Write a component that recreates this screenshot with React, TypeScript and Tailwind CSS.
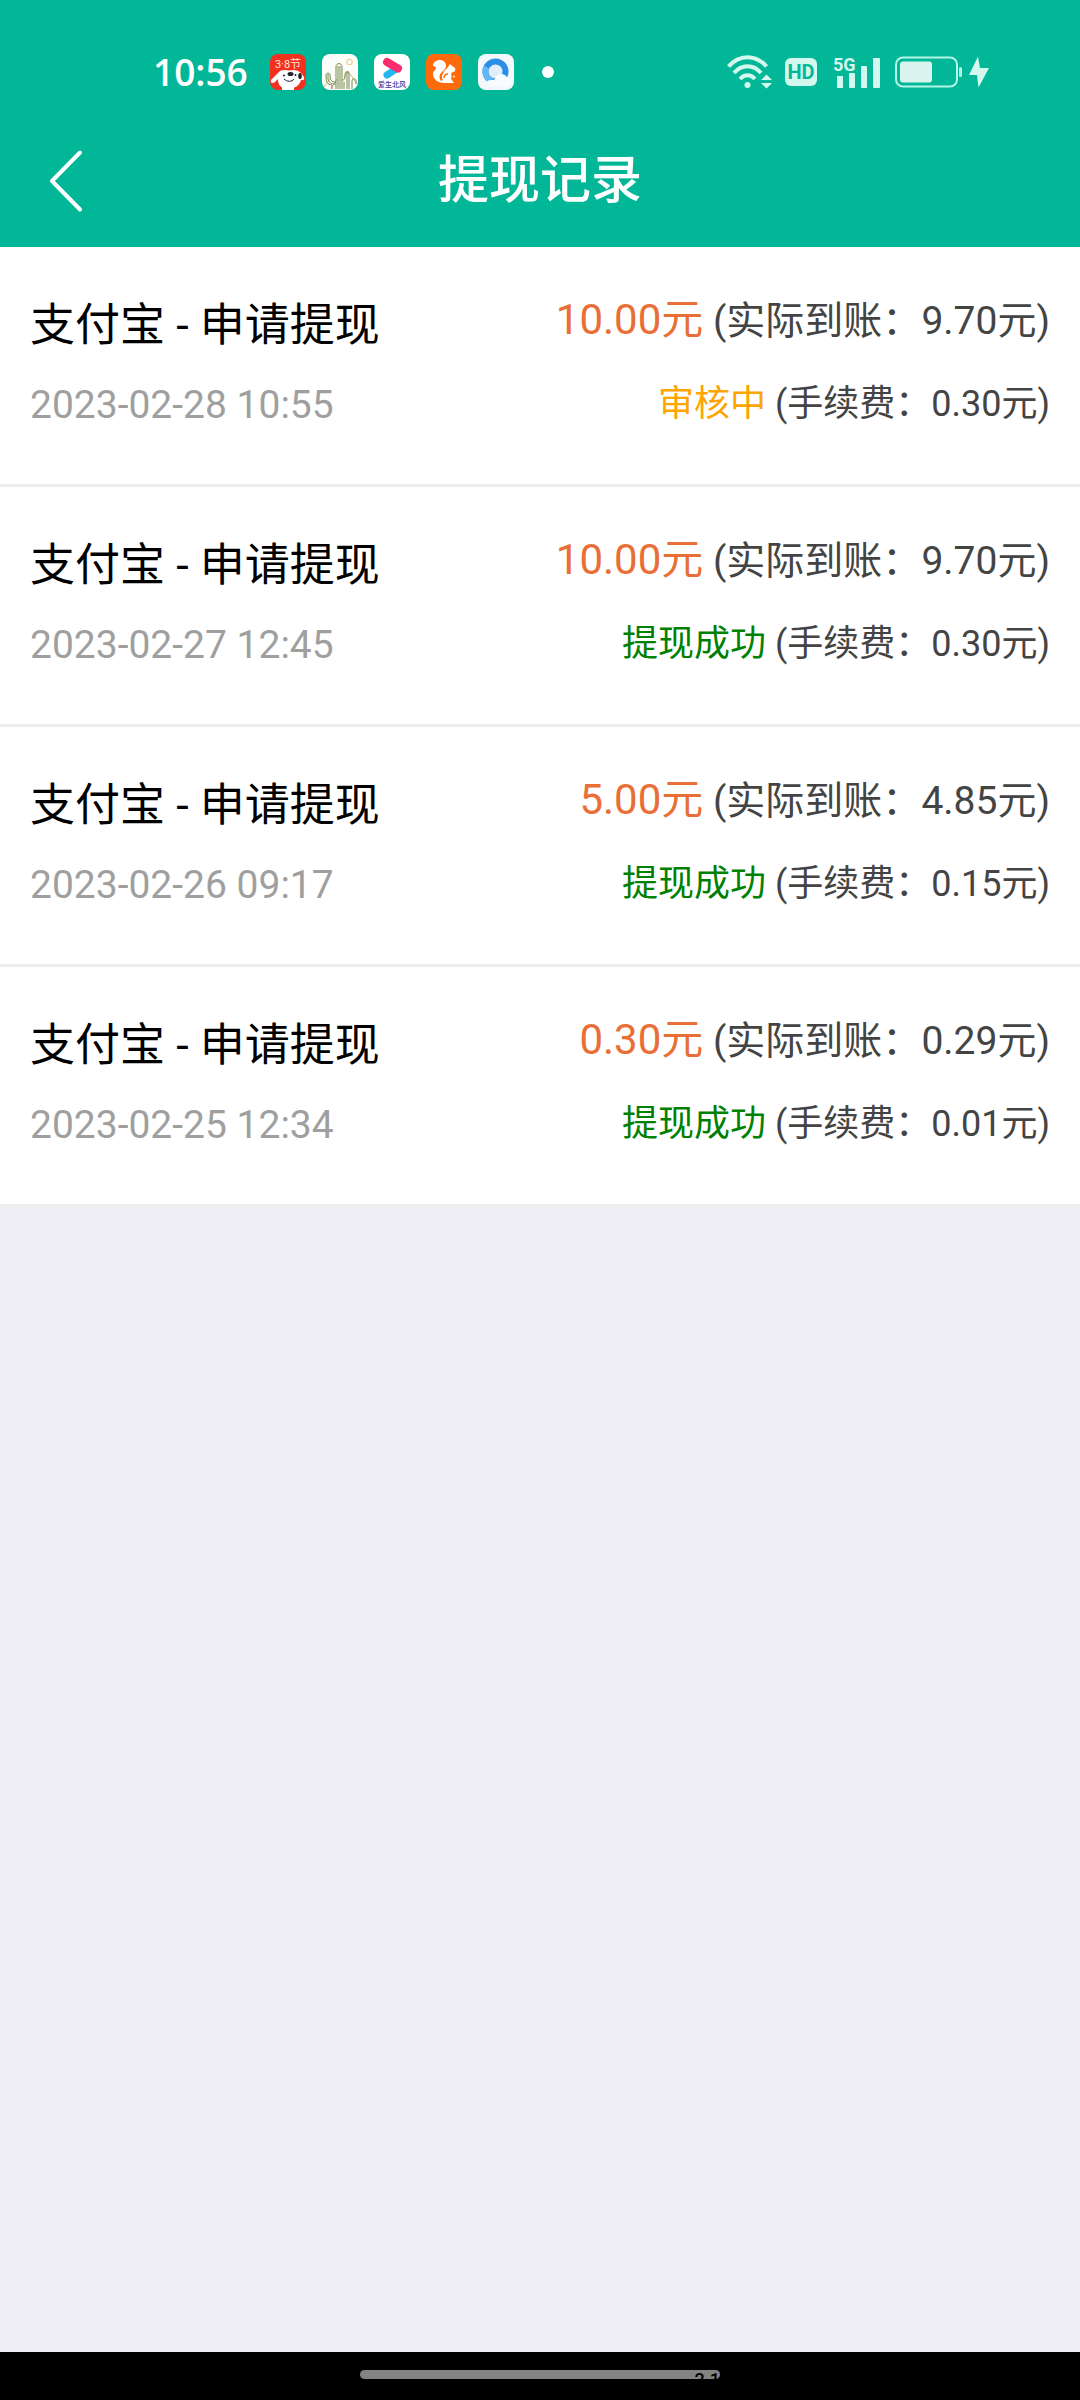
type RecordStatus = "pending" | "success";

const records: {
  id: number;
  title: string;
  time: string;
  amount: string;
  received: string;
  fee: string;
  status: RecordStatus;
}[] = [
  { id: 4, title: "支付宝 - 申请提现", time: "2023-02-28 10:55", amount: "10.00", received: "9.70", fee: "0.30", status: "pending" },
  { id: 3, title: "支付宝 - 申请提现", time: "2023-02-27 12:45", amount: "10.00", received: "9.70", fee: "0.30", status: "success" },
  { id: 2, title: "支付宝 - 申请提现", time: "2023-02-26 09:17", amount: "5.00", received: "4.85", fee: "0.15", status: "success" },
  { id: 1, title: "支付宝 - 申请提现", time: "2023-02-25 12:34", amount: "0.30", received: "0.29", fee: "0.01", status: "success" },
];

const statusMeta: Record<RecordStatus, { label: string; className: string }> = {
  pending: { label: "审核中", className: "text-[#ffa500]" },
  success: { label: "提现成功", className: "text-[#008000]" },
};

function DogIcon() {
  return (
    <svg viewBox="0 0 36 36" className="size-9 rounded-lg bg-[#f4301f]" aria-hidden>
      <text x="18" y="14" textAnchor="middle" fontSize="11" fill="#ffe9d8">
        3·8节
      </text>
      <path
        d="M9 18 C11 15.500 16 16 19 16.500 C23 15.500 28 15.500 31 19 L34 23 C35 26 33 26.500 31 26 C30 30 27 33 24 33.500 L24 36 H12 V33.500 C9 32 8 29 8 25 L5 28 C3 30 0 29 1 26 Z"
        fill="#fff"
      />
      <ellipse cx="20.500" cy="20" rx="3" ry="2" fill="#222" />
      <ellipse cx="30" cy="22" rx="1.800" ry="3" fill="#222" />
      <circle cx="14" cy="21.500" r="1" fill="#222" />
      <circle cx="25.500" cy="21" r="1" fill="#222" />
      <path d="M14 25 C17 28 22 28 24 25" fill="none" stroke="#222" strokeWidth="1" />
    </svg>
  );
}

function CactusIcon() {
  return (
    <svg viewBox="0 0 36 36" className="size-9 rounded-lg bg-[#fdfefa]" fill="none" aria-hidden>
      <circle cx="27.500" cy="8" r="2.800" stroke="#e8c07a" />
      <path d="M2 33 L9 24 M22 24 L26 17 L35 30 M9 35 L15 25" stroke="#c9b48a" />
      <g stroke="#75894d" strokeWidth="1">
        <path d="M14 35 V13 C14 8.500 20 8.500 20 13 V35 M16 35 V12 M18 35 V12" />
        <path d="M14 28 C9 28 8 26 8 21 C8 18.500 4 18.500 4 21 C4 27 5 31 10 31 V35 M6 20 V25 C7 29 9 30 14 30" />
        <path d="M20 26 C23 26 23 25 23 20 C23 17 27 17 27 20 V35 M25 18 V35 M22 35 V28 M30 35 V27 C30 24 34 24 34 27 V30" />
      </g>
    </svg>
  );
}

function VideoIcon() {
  return (
    <svg viewBox="0 0 36 36" className="size-9 rounded-lg bg-white" aria-hidden>
      <path d="M13 21 L22 15" stroke="#22b8f0" strokeWidth="7" strokeLinecap="round" />
      <path d="M13 8 L24 14.500" stroke="#fb2c6e" strokeWidth="8" strokeLinecap="round" />
      <text x="18" y="33" textAnchor="middle" fontSize="7" fontWeight="500" fill="#4a3a9a">
        爱生北风
      </text>
    </svg>
  );
}

function SquirrelIcon() {
  return (
    <svg viewBox="0 0 36 36" className="size-9 rounded-lg bg-[#ff6a0a]" aria-hidden>
      <path
        d="M7 12 C7 8 11 6 14 6 C18 6 20 9 20 12 C20 15 17 16 15.500 18 C19 16 21 15 22 13 L24 10 L26 12 C29 13 30 15 29 17 C28 18.500 25.500 18 25 19.500 C26 22 25.500 24 25 25 L28 29 H18 C12 29 7 25 7 20 C7 17 10 16 10 14 C10 13 9 12 7 12 Z"
        fill="#fff"
      />
      <path d="M15 27 C12 22 14 18 19 17 C16 20 15 23 17 26 Z" fill="#ff6a0a" />
      <path d="M18 24 C18 21 20 20 22 20" fill="none" stroke="#ff6a0a" strokeWidth="1.500" />
      <circle cx="28" cy="22.500" r="1" fill="#fff" />
    </svg>
  );
}

function BrowserIcon() {
  return (
    <svg viewBox="0 0 36 36" className="size-9 rounded-lg bg-[#f3f8fd]" aria-hidden>
      <circle cx="17.500" cy="17.500" r="10" fill="#e2edf7" stroke="#2b8fe8" strokeWidth="6" />
      <path d="M8.500 13 A10 10 0 0 0 14 27" fill="none" stroke="#63b7f3" strokeWidth="6" />
      <path d="M13 32 C7 32 7 26 13 26 C15 26 16 26 17 25 C18 19 27 18 29 23.500 C36 24 35 32 29 32 Z" fill="#f8fbff" />
    </svg>
  );
}

function WifiIcon() {
  return (
    <svg viewBox="0 0 46 34" className="h-[34px] w-[46px]" fill="none" stroke="#d3f8ee" aria-hidden>
      <path d="M1.500 11.500 C12 -1 29 -1 39.500 11.500" strokeWidth="4" />
      <path d="M7 18 C14.500 9 26.500 9 34 18" strokeWidth="4" />
      <path d="M13 24 C17.500 19 23.500 19 28 24" strokeWidth="4" />
      <circle cx="20.500" cy="30" r="3" fill="#d3f8ee" stroke="none" />
      <path d="M34 25 L39.500 19.500 L45 25 Z M34 28 L39.500 33.500 L45 28 Z" fill="#d3f8ee" stroke="none" />
    </svg>
  );
}

function SignalIcon() {
  return (
    <svg viewBox="0 0 48 38" className="h-[38px] w-12" fill="#d3f8ee" aria-hidden>
      <text x="0" y="18" fontSize="18" fontWeight="700">
        5G
      </text>
      <rect x="4" y="23" width="6" height="12" rx="1" />
      <rect x="16" y="20" width="6" height="15" rx="1" />
      <rect x="28" y="13" width="6" height="22" rx="1" />
      <rect x="40" y="5" width="7" height="30" rx="1" />
    </svg>
  );
}

function BatteryIcon() {
  return (
    <svg viewBox="0 0 68 32" className="h-8 w-[68px]" aria-hidden>
      <rect x="1" y="1.500" width="61" height="29" rx="7" fill="none" stroke="#b5f5e5" strokeWidth="2" />
      <rect x="5" y="5.500" width="32" height="21" rx="3" fill="#d9f5ee" />
      <rect x="64" y="11" width="3" height="10" rx="1.500" fill="#b5f5e5" />
    </svg>
  );
}

function BoltIcon() {
  return (
    <svg viewBox="0 0 20 32" className="h-8 w-5" fill="#d3f8ee" aria-hidden>
      <path d="M9 0.500 L0 19 H8 L9.500 31.500 L20 12 H11 Z" />
    </svg>
  );
}

function StatusBar() {
  return (
    <div className="flex h-[114px] items-center justify-between pt-[30px] pr-[91px] pl-[153px]">
      <div className="flex items-center gap-4">
        <span className="w-[101px] font-['Open_Sans'] text-[37px] leading-[44px] font-semibold">10:56</span>
        <DogIcon />
        <CactusIcon />
        <VideoIcon />
        <SquirrelIcon />
        <BrowserIcon />
        <span className="ml-3 size-3 rounded-full bg-white" />
      </div>
      <div className="flex items-center">
        <WifiIcon />
        <span className="ml-3 flex h-7 w-8 items-center justify-center rounded-md bg-[#d3f8ee] text-xl font-bold text-[#02b798]">
          HD
        </span>
        <span className="ml-4">
          <SignalIcon />
        </span>
        <span className="ml-[14px]">
          <BatteryIcon />
        </span>
        <span className="ml-[6px]">
          <BoltIcon />
        </span>
      </div>
    </div>
  );
}

function NavBar() {
  return (
    <div className="grid h-[133px] grid-cols-[1fr_auto_1fr] items-center px-[48px]">
      <button type="button" aria-label="返回" className="justify-self-start">
        <svg viewBox="0 0 36 64" className="h-16 w-9" fill="none" stroke="#fff" strokeWidth="4" strokeLinecap="round" strokeLinejoin="round">
          <path d="M32 3.500 L4 32 L32 60.500" />
        </svg>
      </button>
      <h1 className="text-[51px] leading-[60px] font-medium">提现记录</h1>
    </div>
  );
}

export default function App() {
  return (
    <div className="flex min-h-screen flex-col bg-[#efeef4] font-['Roboto','Noto_Sans_CJK_SC',sans-serif]">
      <header className="bg-[#02b798] text-white">
        <StatusBar />
        <NavBar />
      </header>

      <ul>
        {records.map((item) => {
          const status = statusMeta[item.status];
          return (
            <li
              key={item.id}
              className="flex h-60 justify-between border-b-[3px] border-[#eeeeee] bg-white px-[30px] pt-[42px]"
            >
              <div>
                <p className="text-[45px] leading-[74px] text-black">{item.title}</p>
                <p className="text-[39px] leading-[84px] text-[#9f9f9f]">{item.time}</p>
              </div>
              <div className="text-right text-[#444]">
                <p className="text-[39px] leading-[62px]">
                  <span className="text-[42px] text-[#e96f36]">{item.amount}元</span> (实际到账：{item.received}元)
                </p>
                <p className="text-[36px] leading-[104px]">
                  <span className={status.className}>{status.label}</span> (手续费：{item.fee}元)
                </p>
              </div>
            </li>
          );
        })}
      </ul>

      <footer className="mt-auto flex h-12 items-start justify-center bg-black pt-[18px]">
        <div className="relative h-[9px] w-1/3 overflow-hidden rounded-full bg-[#838383]">
          <span className="absolute top-0 right-0 text-lg leading-5 font-medium text-black">2.1</span>
        </div>
      </footer>
    </div>
  );
}
